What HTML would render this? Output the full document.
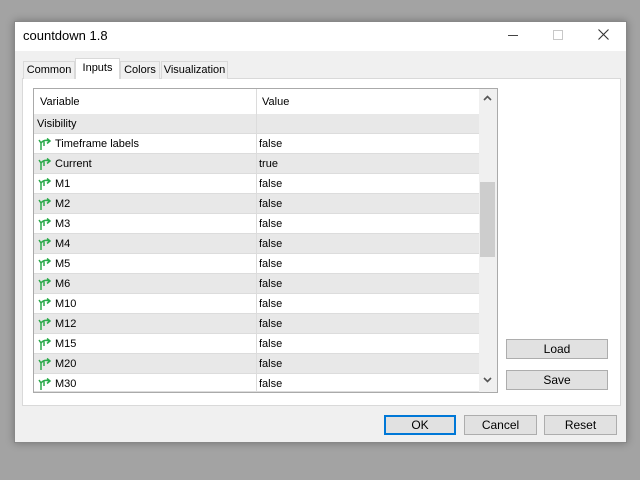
<!DOCTYPE html><html><head><style>
body{margin:0;width:640px;height:480px;background:#a3a3a3;position:relative;overflow:hidden;font-family:"Liberation Sans",sans-serif;font-size:11px;color:#000}
.a{position:absolute;box-sizing:border-box}
.win{left:14px;top:21px;width:613px;height:422px;background:#f0f0f0;border:1px solid #888;box-shadow:0 0 8px rgba(0,0,0,.3)}
.tab{top:61px;height:18px;border:1px solid #d9d9d9;border-bottom:none;background:#f0f0f0;text-align:center;line-height:17px}
.row{left:34px;width:445px;height:20px;border-bottom:1px solid #dcdcdc}
.row span{position:absolute;top:4px}
.btn{background:#e1e1e1;border:1px solid #adadad;text-align:center;line-height:18px;font-size:12px}
</style></head><body>
<div class="a win"></div>
<div class="a" style="left:15px;top:22px;width:611px;height:29px;background:#fff"></div>
<div class="a" style="left:23px;top:28px;font-size:13px">countdown 1.8</div>
<div class="a" style="left:508px;top:35px;width:10px;height:1px;background:#444"></div>
<div class="a" style="left:553px;top:30px;width:10px;height:10px;border:1px solid #c8c8c8"></div>
<svg class="a" style="left:598px;top:29px" width="11" height="11" viewBox="0 0 11 11"><path d="M0.5 0.5L10.5 10.5M10.5 0.5L0.5 10.5" stroke="#333" stroke-width="1.1"/></svg>
<div class="a" style="left:22px;top:78px;width:599px;height:328px;background:#fff;border:1px solid #d9d9d9"></div>
<div class="a tab" style="left:23px;width:52px">Common</div>
<div class="a tab" style="left:75px;top:58px;height:21px;width:45px;background:#fff;line-height:19px">Inputs</div>
<div class="a tab" style="left:120px;width:40px">Colors</div>
<div class="a tab" style="left:161px;width:67px">Visualization</div>
<div class="a" style="left:33px;top:88px;width:465px;height:305px;border:1px solid #aaa;background:#fff;overflow:hidden"></div>
<div class="a" style="left:34px;top:89px;width:445px;height:25px;background:#fff"></div>
<div class="a" style="left:40px;top:96px">Variable</div>
<div class="a" style="left:262px;top:96px">Value</div>
<div class="a row" style="top:114px;background:#e8e8e8"><span style="left:3px">Visibility</span></div>
<div id="rows"></div>
<div class="a" style="left:256px;top:89px;width:1px;height:303px;background:#dcdcdc"></div>
<div class="a" style="left:479px;top:89px;width:18px;height:303px;background:#f0f0f0"></div>
<div class="a" style="left:480px;top:182px;width:15px;height:75px;background:#cdcdcd"></div>
<svg class="a" style="left:483px;top:95px" width="9" height="6" viewBox="0 0 9 6"><path d="M1 5L4.5 1.5L8 5" stroke="#555" stroke-width="1.6" fill="none"/></svg>
<svg class="a" style="left:483px;top:377px" width="9" height="6" viewBox="0 0 9 6"><path d="M1 1L4.5 4.5L8 1" stroke="#555" stroke-width="1.6" fill="none"/></svg>
<div class="a btn" style="left:506px;top:339px;width:102px;height:20px">Load</div>
<div class="a btn" style="left:506px;top:370px;width:102px;height:20px">Save</div>
<div class="a btn" style="left:384px;top:415px;width:72px;height:20px;border:2px solid #0078d7;line-height:16px">OK</div>
<div class="a btn" style="left:464px;top:415px;width:73px;height:20px">Cancel</div>
<div class="a btn" style="left:544px;top:415px;width:73px;height:20px">Reset</div>
<script>
var r=[["Timeframe labels","false"],["Current","true"],["M1","false"],["M2","false"],["M3","false"],["M4","false"],["M5","false"],["M6","false"],["M10","false"],["M12","false"],["M15","false"],["M20","false"],["M30","false"]],h="";
r.forEach(function(x,i){var t=134+i*20;var bg=i%2?"#e8e8e8":"#fff";
h+='<div class="a row" style="top:'+t+'px;background:'+bg+(t+20>392?';height:'+(392-t)+'px':'')+'"><svg style="position:absolute;left:4px;top:3px" width="16" height="14" viewBox="0 0 16 14"><path d="M3 13V6M3 6L1 3M3 6Q6 2 11 4M9 1.5L12 4L9 6.5M6 4.5L6 9" stroke="#2aaa4a" stroke-width="1.5" fill="none"/></svg><span style="left:21px">'+x[0]+'</span><span style="left:225px">'+x[1]+'</span></div>';});
document.getElementById("rows").outerHTML=h;
</script>
</body></html>
